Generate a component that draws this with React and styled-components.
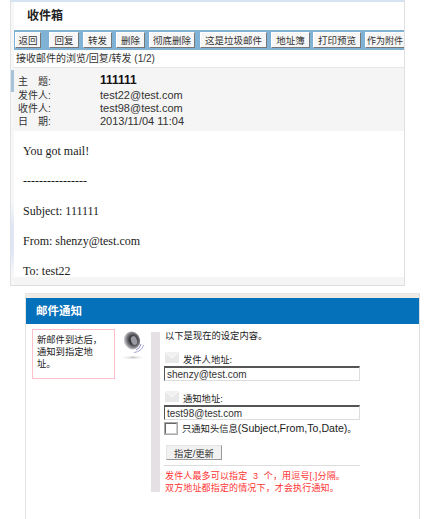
import React from 'react'
import styled, { createGlobalStyle } from 'styled-components'

const GlobalStyle = createGlobalStyle`
    html, body {
        margin: 0;
        padding: 0;
        background: #fff;
    }
    body {
        width: 444px;
        height: 519px;
        overflow: hidden;
        font-family: "Liberation Sans", "Noto Sans CJK SC", sans-serif;
        font-size: 10px;
        color: #222;
    }
`

const toolbarButtons = [
    { label: '返回', width: 26, gap: 8 },
    { label: '回复', width: 30, gap: 4 },
    { label: '转发', width: 29, gap: 4 },
    { label: '删除', width: 29, gap: 4 },
    { label: '彻底删除', width: 46, gap: 5 },
    { label: '这是垃圾邮件', width: 67, gap: 4 },
    { label: '地址簿', width: 39, gap: 3 },
    { label: '打印预览', width: 48, gap: 4 },
    { label: '作为附件', width: 40, gap: 0, small: true },
]

const infoRows = [
    { label: '主\u3000题:', value: '111111', strong: true },
    { label: '发件人:', value: 'test22@test.com' },
    { label: '收件人:', value: 'test98@test.com' },
    { label: '日\u3000期:', value: '2013/11/04 11:04' },
]

const bodyLines = ['You got mail!', '----------------', 'Subject: 111111', 'From: shenzy@test.com', 'To: test22']

export default function App() {
    return (
        <Page>
            <GlobalStyle />
            <MailPanel>
                <Gutter />
                <MailMain>
                    <MailTitle>收件箱</MailTitle>
                    <Toolbar>
                        {toolbarButtons.map(b => (
                            <ToolButton key={b.label} $width={b.width} $gap={b.gap} $small={b.small}>{b.label}</ToolButton>
                        ))}
                    </Toolbar>
                    <Crumb>接收邮件的浏览/回复/转发 (1/2)</Crumb>
                    <InfoBlock>
                        {infoRows.map(row => (
                            <InfoRow key={row.value} $strong={row.strong}>
                                <InfoLabel>{row.label}</InfoLabel>
                                <InfoValue $strong={row.strong}>{row.value}</InfoValue>
                            </InfoRow>
                        ))}
                    </InfoBlock>
                    <MailBody>
                        {bodyLines.map(line => <BodyLine key={line}>{line}</BodyLine>)}
                    </MailBody>
                    <MailFoot />
                </MailMain>
            </MailPanel>

            <NoticePanel>
                <NoticeStrip />
                <NoticeHeader>邮件通知</NoticeHeader>
                <NoticeBody>
                    <NoteBox>新邮件到达后，<br />通知到指定地<br />址。</NoteBox>
                    <Speaker />
                    <Divider />
                    <Form>
                        <Intro>以下是现在的设定内容。</Intro>
                        <FieldHead>
                            <Envelope />
                            <span>发件人地址:</span>
                        </FieldHead>
                        <AddressInput readOnly value="shenzy@test.com" />
                        <FieldHead $second>
                            <Envelope />
                            <span>通知地址:</span>
                        </FieldHead>
                        <AddressInput readOnly value="test98@test.com" />
                        <CheckRow>
                            <CheckBox />
                            <span>只通知头信息<Latin>(Subject,From,To,Date)</Latin>。</span>
                        </CheckRow>
                        <SubmitButton>指定/更新</SubmitButton>
                        <Rule />
                        <Warning>发件人最多可以指定 3 个，用逗号[,]分隔。<br />双方地址都指定的情况下，才会执行通知。</Warning>
                    </Form>
                </NoticeBody>
            </NoticePanel>
        </Page>
    )
}

function Envelope() {
    return (
        <svg width="14" height="11" viewBox="0 0 14 11">
            <rect width="14" height="11" fill="#e8e8e8" />
            <path d="M0 0 L7 6 L14 0" fill="#f0f0f0" stroke="#fafafa" strokeWidth="1" />
        </svg>
    )
}

function Speaker() {
    return (
        <SpeakerWrap>
            <svg width="28" height="30" viewBox="0 0 28 30">
                <defs>
                    <radialGradient id="cone" cx="0.58" cy="0.5" r="0.55">
                        <stop offset="0" stopColor="#55555c" />
                        <stop offset="0.35" stopColor="#2a2a2e" />
                        <stop offset="0.7" stopColor="#77777d" />
                        <stop offset="1" stopColor="#c9c9cf" />
                    </radialGradient>
                    <linearGradient id="shade" x1="0" y1="0" x2="1" y2="0">
                        <stop offset="0" stopColor="#ffffff" stopOpacity="0" />
                        <stop offset="0.5" stopColor="#c4c4c4" />
                        <stop offset="1" stopColor="#ffffff" stopOpacity="0" />
                    </linearGradient>
                </defs>
                <ellipse cx="13" cy="9.5" rx="8" ry="9" transform="rotate(-20 13 9.5)" fill="url(#cone)" />
                <ellipse cx="15" cy="9.5" rx="3" ry="4.5" transform="rotate(-20 15 9.5)" fill="#9a9aa2" />
                <path d="M17 19 Q21 17.5 22 13" stroke="#8d8cc4" strokeWidth="1" fill="none" />
                <path d="M15 21.5 Q23 20.5 24.5 14" stroke="#a5a4d4" strokeWidth="1" fill="none" />
                <rect x="0" y="25.5" width="28" height="2" fill="url(#shade)" />
            </svg>
        </SpeakerWrap>
    )
}

const Page = styled.div`
    width: 444px;
    height: 519px;
    overflow: hidden;
`

const MailPanel = styled.section`
    width: 395px;
    height: 286px;
    margin-left: 10px;
    display: flex;
    border-left: 1px solid #dfe3e6;
    border-right: 1px solid #dfdfdf;
    border-bottom: 1px solid #dedede;
    border-top: 2px solid #d5e4f0;
    box-sizing: border-box;
`

const Gutter = styled.div`
    width: 3px;
    flex: none;
    background: linear-gradient(
        to bottom,
        #f7f7f7 0, #f7f7f7 68px,
        #a9c3d8 68px, #a9c3d8 90px,
        #f7f7f7 90px, #f7f7f7 200px,
        #dfe7f5 225px, #dfe7f5 250px,
        #f7f7f7 270px
    );
`

const MailMain = styled.div`
    flex: 1;
    min-width: 0;
    display: flex;
    flex-direction: column;
    overflow: hidden;
`

const MailTitle = styled.h1`
    height: 28px;
    margin: 0;
    padding-left: 13px;
    font-size: 12px;
    line-height: 28px;
    font-weight: 700;
    color: #222;
`

const Toolbar = styled.div`
    height: 20px;
    flex: none;
    display: flex;
    align-items: center;
    padding-left: 1px;
    background: #7fb2d4;
    overflow: hidden;
`

const ToolButton = styled.div`
    width: ${p => p.$width}px;
    height: 16px;
    margin-right: ${p => p.$gap}px;
    flex: none;
    box-sizing: border-box;
    display: flex;
    align-items: center;
    justify-content: center;
    white-space: nowrap;
    font-size: ${p => (p.$small ? 9 : 9.5)}px;
    color: #333;
    background: #f6f6f6;
    border: 1px solid;
    border-color: #fff #777 #777 #fff;
`

const Crumb = styled.div`
    height: 18px;
    flex: none;
    box-sizing: border-box;
    padding-left: 2px;
    font-size: 10px;
    line-height: 18px;
    color: #333;
    border-bottom: 1px solid #e6e6e6;
`

const InfoBlock = styled.div`
    height: 63px;
    flex: none;
    box-sizing: border-box;
    padding: 4px 0 0 4px;
    background: #f5f5f5;
`

const InfoRow = styled.div`
    display: flex;
    align-items: center;
    height: ${p => (p.$strong ? 16 : 13)}px;
`

const InfoLabel = styled.span`
    width: 82px;
    flex: none;
    font-size: 10px;
    color: #333;
`

const InfoValue = styled.span`
    font-size: ${p => (p.$strong ? 12 : 11)}px;
    font-weight: ${p => (p.$strong ? 700 : 400)};
    color: ${p => (p.$strong ? '#111' : '#333')};
`

const MailBody = styled.div`
    height: 146px;
    flex: none;
    box-sizing: border-box;
    padding: 14px 0 0 9px;
    overflow: hidden;
    font-family: "Liberation Serif", serif;
    font-size: 12px;
    color: #222;
`

const BodyLine = styled.p`
    height: 12px;
    margin: 0 0 18px;
    line-height: 12px;
    white-space: nowrap;
    &:last-child {
        margin-bottom: 0;
    }
`

const MailFoot = styled.div`
    flex: 1;
    background: #f5f5f5;
`

const NoticePanel = styled.section`
    width: 395px;
    margin: 7px 0 0 25px;
    box-sizing: border-box;
    height: 226px;
    border-left: 1px solid #e4e4e4;
    border-right: 1px solid #dedede;
`

const NoticeStrip = styled.div`
    height: 5px;
    background: #f1ebe6;
    border-top: 1px solid #e6e6e6;
    box-sizing: border-box;
`

const NoticeHeader = styled.h2`
    height: 26px;
    margin: 0;
    padding-left: 10px;
    background: #0671bb;
    color: #fff;
    font-size: 11.5px;
    font-weight: 700;
    line-height: 26px;
`

const NoticeBody = styled.div`
    display: grid;
    grid-template-columns: 84px 35px 9px 1fr;
    align-items: start;
    padding: 4px 0 0 6px;
`

const NoteBox = styled.div`
    height: 50px;
    margin: 1px 1px 0 0;
    box-sizing: border-box;
    padding: 4px 0 0 4px;
    border: 1px solid #ffc0cb;
    font-size: 9.3px;
    line-height: 12px;
    color: #222;
`

const SpeakerWrap = styled.div`
    padding: 3px 0 0 3px;
    line-height: 0;
`

const Divider = styled.div`
    height: 160px;
    margin-top: 4px;
    background: #e4e0e4;
`

const Form = styled.div`
    display: flex;
    flex-direction: column;
    align-items: flex-start;
    padding-left: 4px;
`

const Intro = styled.div`
    height: 14px;
    margin: 1px 0 0 1px;
    line-height: 14px;
    font-size: 9.3px;
    color: #222;
`

const FieldHead = styled.div`
    display: flex;
    align-items: flex-start;
    gap: 4px;
    height: 14px;
    margin: ${p => (p.$second ? 10 : 9)}px 0 0 1px;
    font-size: 9.3px;
    line-height: 16px;
    color: #222;
`

const AddressInput = styled.input`
    width: 196px;
    height: 15px;
    box-sizing: border-box;
    padding: 0 2px;
    background: #fff;
    border: 1px solid;
    border-color: #555 #ddd #ddd #555;
    border-top-width: 2px;
    font-family: "Liberation Sans", sans-serif;
    font-size: 10px;
    color: #333;
    outline: none;
`

const CheckRow = styled.div`
    display: flex;
    align-items: center;
    gap: 5px;
    height: 14px;
    margin: 1px 0 0 1px;
    font-size: 9.3px;
    color: #222;
`

const Latin = styled.span`
    font-size: 10.6px;
`

const CheckBox = styled.span`
    width: 12px;
    height: 11px;
    box-sizing: border-box;
    background: #fff;
    border: 1px solid;
    border-color: #666 #ccc #ccc #666;
    outline: 1px solid #aaa;
`

const SubmitButton = styled.div`
    width: 56px;
    height: 15px;
    margin: 10px 0 0 2px;
    box-sizing: border-box;
    display: flex;
    align-items: center;
    justify-content: center;
    font-size: 9.3px;
    color: #333;
    background: #f1f1f1;
    border: 1px solid;
    border-color: #e4e4e4 #999 #999 #e4e4e4;
`

const Rule = styled.div`
    width: 196px;
    height: 1px;
    margin-top: 5px;
    background: #ddd;
`

const Warning = styled.div`
    margin: 4px 0 0 1px;
    font-size: 9px;
    letter-spacing: 0.15px;
    word-spacing: 3px;
    line-height: 12px;
    color: #f33;
    white-space: nowrap;
`
